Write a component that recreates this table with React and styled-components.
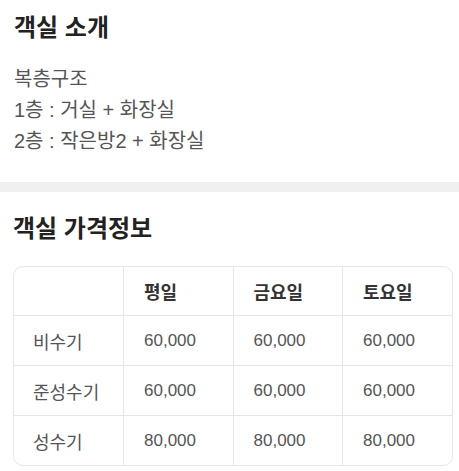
import React from "react";
import styled, { createGlobalStyle } from "styled-components";

const GlobalStyle = createGlobalStyle`
  html, body { margin: 0; padding: 0; background: #fff; }
  body { font-family: "Liberation Sans", "Noto Sans CJK KR", sans-serif; }
`;

const Page = styled.div`
  width: 459px;
  background: #fff;
`;

const Section = styled.section`
  padding: ${(p) => p.$pad};
`;

const Title = styled.h2`
  margin: 0;
  font-size: 24px;
  line-height: 32px;
  font-weight: 700;
  color: #222;
`;

const Body = styled.div`
  margin-top: 20px;
  font-size: 20px;
  line-height: 31px;
  color: #555;
`;

const Divider = styled.div`
  height: 10px;
  background: #f0f0f2;
`;

const TableWrap = styled.div`
  margin-top: 21px;
  width: 438px;
  border: 1px solid #e6e6e6;
  border-radius: 10px;
  overflow: hidden;
`;

const Table = styled.table`
  width: 100%;
  border-collapse: collapse;
  table-layout: fixed;
`;

const Th = styled.th`
  height: 48px;
  padding: 0 0 0 20px;
  text-align: left;
  font-size: 18px;
  font-weight: 700;
  color: #333;
  border-left: ${(p) => (p.$first ? "none" : "1px solid #e6e6e6")};
`;

const Td = styled.td`
  height: 49px;
  padding: 0 0 0 ${(p) => (p.$first ? "19px" : "20px")};
  font-size: ${(p) => (p.$first ? "18px" : "17px")};
  color: #555;
  border-top: 1px solid #e6e6e6;
  border-left: ${(p) => (p.$first ? "none" : "1px solid #e6e6e6")};
`;

const rows = [
  ["비수기", "60,000", "60,000", "60,000"],
  ["준성수기", "60,000", "60,000", "60,000"],
  ["성수기", "80,000", "80,000", "80,000"],
];

export default function App() {
  return (
    <Page>
      <GlobalStyle />
      <Section $pad="12px 14px 25px">
        <Title>객실 소개</Title>
        <Body>
          복층구조
          <br />
          1층 : 거실 + 화장실
          <br />
          2층 : 작은방2 + 화장실
        </Body>
      </Section>
      <Divider />
      <Section $pad="21px 13px 8px">
        <Title>객실 가격정보</Title>
        <TableWrap>
          <Table>
            <thead>
              <tr>
                <Th $first></Th>
                <Th>평일</Th>
                <Th>금요일</Th>
                <Th>토요일</Th>
              </tr>
            </thead>
            <tbody>
              {rows.map((r) => (
                <tr key={r[0]}>
                  {r.map((c, i) => (
                    <Td key={i} $first={i === 0}>
                      {c}
                    </Td>
                  ))}
                </tr>
              ))}
            </tbody>
          </Table>
        </TableWrap>
      </Section>
    </Page>
  );
}
